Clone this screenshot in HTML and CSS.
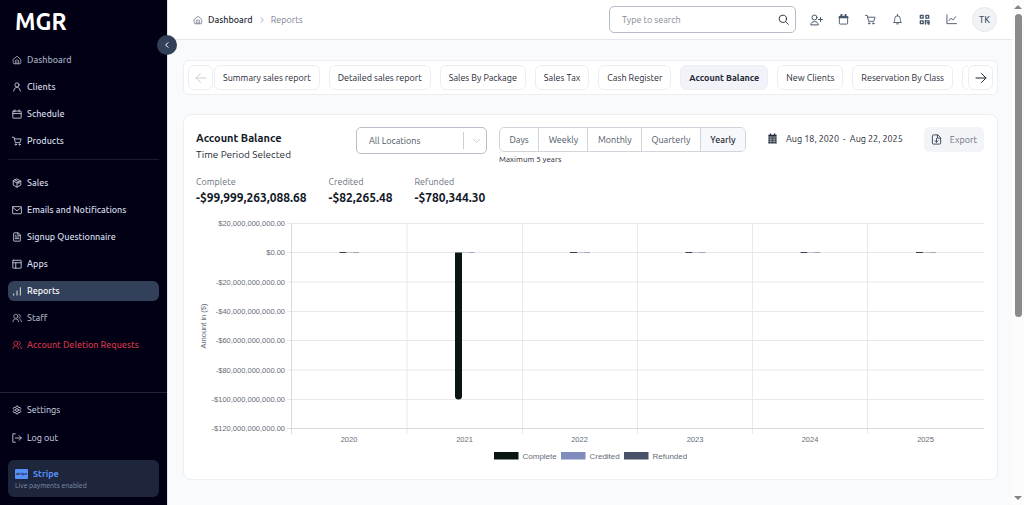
FILE: index.html
```html
<!DOCTYPE html>
<html lang="en">
<head>
<meta charset="utf-8">
<title>Reports - Account Balance</title>
<meta name="viewport" content="width=device-width, initial-scale=1">
<link rel="stylesheet" href="styles.css">
</head>
<body>
<svg class="defs" aria-hidden="true">
  <symbol id="home" viewBox="0 0 24 24"><path d="M3 10.500 12 3l9 7.500V19a2 2 0 0 1-2 2H5a2 2 0 0 1-2-2z"/><path d="M8 21v-7a2 2 0 0 1 2-2h4a2 2 0 0 1 2 2v7M12 16v5"/></symbol>
  <symbol id="user" viewBox="0 0 24 24"><circle cx="12" cy="7" r="5"/><path d="M4 22l2-6 4-3h4l4 3 2 6"/></symbol>
  <symbol id="calendar" viewBox="0 0 24 24"><rect x="2" y="5" width="20" height="17" rx="1"/><path d="M2 11h20M7 2v5M17 2v5"/></symbol>
  <symbol id="cart" viewBox="0 0 24 24"><path d="M1 3h4l3 13h11l3-9H6"/><circle cx="9" cy="20.500" r="1.500"/><circle cx="18" cy="20.500" r="1.500"/></symbol>
  <symbol id="box" viewBox="0 0 24 24"><path d="M12 2.500 21 7v10l-9 5-9-5V7zM3 7l9 5 9-5M12 12v10M7.500 4.800l9 4.700v4"/></symbol>
  <symbol id="mail" viewBox="0 0 24 24"><rect x="1.500" y="4" width="21" height="17" rx="1"/><path d="m2 6 10 8L22 6"/></symbol>
  <symbol id="file" viewBox="0 0 24 24"><path d="M14 2H5a1 1 0 0 0-1 1v18a1 1 0 0 0 1 1h14a1 1 0 0 0 1-1V8zM14 2v6h6M8 12h8M8 16h8M8 8h2"/></symbol>
  <symbol id="layout" viewBox="0 0 24 24"><rect x="2" y="3" width="20" height="19" rx="1"/><path d="M2 9h20M9 9v13"/></symbol>
  <symbol id="bars" viewBox="0 0 24 24"><path d="M4 19v3M12 12v10M20 4v18"/></symbol>
  <symbol id="users" viewBox="0 0 24 24"><circle cx="9" cy="8" r="5"/><path d="M2 21a7 7 0 0 1 14 0M16 3a5 5 0 0 1 1 9.500M19 15a7 7 0 0 1 4 6"/></symbol>
  <symbol id="gear" viewBox="0 0 24 24"><path d="m9.500 4 .8-2.500h3.400l.8 2.500 2.300 1.300 2.600-.6 1.700 3-1.800 2v2.600l1.800 2-1.700 3-2.600-.6-2.300 1.300-.8 2.500h-3.400L9.500 18l-2.300-1.300-2.600.6-1.700-3 1.800-2V9.700l-1.800-2 1.700-3 2.600.6z" transform="translate(0 1)"/><circle cx="12" cy="12" r="3.500"/></symbol>
  <symbol id="logout" viewBox="0 0 24 24"><path d="M8 2H2v20h6M8 12h14M17 6.500l5.500 5.500-5.500 5.500"/></symbol>
  <symbol id="left" viewBox="0 0 24 24"><path d="m15 5-7 7 7 7"/></symbol>
  <symbol id="right" viewBox="0 0 24 24"><path d="m9 5 7 7-7 7"/></symbol>
  <symbol id="down" viewBox="0 0 24 24"><path d="m3 8 9 9 9-9"/></symbol>
  <symbol id="arrow-left" viewBox="0 0 24 24"><path d="M22 12H2M11 3l-9 9 9 9"/></symbol>
  <symbol id="arrow-right" viewBox="0 0 24 24"><path d="M2 12h20M13 3l9 9-9 9"/></symbol>
  <symbol id="search" viewBox="0 0 24 24"><circle cx="10.500" cy="10.500" r="8"/><path d="m16.500 16.500 6 6"/></symbol>
  <symbol id="user-plus" viewBox="0 0 26 24"><circle cx="9" cy="7" r="5"/><path d="M1.500 21c0-8 15-8 15 0zM21 7v8M17 11h8"/></symbol>
  <symbol id="date" viewBox="0 0 24 24"><rect x="3" y="5" width="18" height="17" rx="2"/><path d="M3 7h18M7.500 1.500V5M16.500 1.500V5" stroke-width="4"/></symbol>
  <symbol id="bell" viewBox="0 0 24 24"><path d="M12 1v3M4 18c2-2 2-4 2-8a6 6 0 0 1 12 0c0 4 0 6 2 8zM10 21.500h4"/></symbol>
  <symbol id="qr" viewBox="0 0 24 24"><path d="M3 3h6v6H3zM15 3h6v6h-6zM3 15h6v6H3zM14 14v8M14 15h8v4h-4M20 22h2"/></symbol>
  <symbol id="chart" viewBox="0 0 24 24"><path d="M2 2v19h21M6 15l5-6 4 4 6-7"/></symbol>
  <symbol id="calendar-solid" viewBox="0 0 24 24"><path d="M3 4h3V1h3v3h6V1h3v3h3v4H3zM3 9h18v14H3z" fill="currentColor" stroke="none"/><path d="M3 13.500h18M3 18h18M8.500 9v14M15.500 9v14" stroke="#fff" stroke-width="1"/></symbol>
  <symbol id="export" viewBox="0 0 24 24"><path d="M14 2H5a2 2 0 0 0-2 2v16a2 2 0 0 0 2 2h14a2 2 0 0 0 2-2V9zM14 2v7h7M12 10v8M8.500 14.500l3.500 3.500 3.500-3.500"/></symbol>
</svg>

<div class="app">
  <aside class="sidebar">
    <div class="brand">MGR</div>
    <nav class="nav nav-main">
      <a class="item dim" href="#"><svg class="icon"><use href="#home"/></svg>Dashboard</a>
      <a class="item" href="#"><svg class="icon"><use href="#user"/></svg>Clients</a>
      <a class="item" href="#"><svg class="icon"><use href="#calendar"/></svg>Schedule</a>
      <a class="item" href="#"><svg class="icon"><use href="#cart"/></svg>Products</a>
    </nav>
    <nav class="nav nav-more">
      <a class="item" href="#"><svg class="icon"><use href="#box"/></svg>Sales</a>
      <a class="item" href="#"><svg class="icon"><use href="#mail"/></svg>Emails and Notifications</a>
      <a class="item" href="#"><svg class="icon"><use href="#file"/></svg>Signup Questionnaire</a>
      <a class="item" href="#"><svg class="icon"><use href="#layout"/></svg>Apps</a>
      <a class="item active" href="#" aria-current="page"><svg class="icon"><use href="#bars"/></svg>Reports</a>
      <a class="item dim" href="#"><svg class="icon"><use href="#users"/></svg>Staff</a>
      <a class="item danger" href="#"><svg class="icon"><use href="#users"/></svg>Account Deletion Requests</a>
    </nav>
    <div class="side-foot">
      <a class="item" href="#"><svg class="icon"><use href="#gear"/></svg>Settings</a>
      <a class="item" href="#"><svg class="icon"><use href="#logout"/></svg>Log out</a>
      <a class="stripe" href="#">
        <span class="stripe-name"><span class="stripe-logo">stripe</span>Stripe</span>
        <span class="stripe-note">Live payments enabled</span>
      </a>
    </div>
    <button class="collapse" type="button" aria-label="Collapse sidebar"><svg class="icon small"><use href="#left"/></svg></button>
  </aside>

  <div class="page">
    <header class="topbar">
      <nav class="crumbs" aria-label="Breadcrumb">
        <svg class="icon"><use href="#home"/></svg>
        <a class="crumb" href="#">Dashboard</a>
        <svg class="icon small"><use href="#right"/></svg>
        <span>Reports</span>
      </nav>
      <div class="search">
        <input class="search-input" type="text" placeholder="Type to search" aria-label="Search">
        <button class="search-btn" type="button" aria-label="Search"><svg class="icon mid"><use href="#search"/></svg></button>
      </div>
      <div class="tools">
        <button class="tool" type="button" aria-label="Add client"><svg class="icon wide"><use href="#user-plus"/></svg></button>
        <button class="tool" type="button" aria-label="Calendar"><svg class="icon mid"><use href="#date"/></svg></button>
        <button class="tool" type="button" aria-label="Cart"><svg class="icon mid"><use href="#cart"/></svg></button>
        <button class="tool" type="button" aria-label="Notifications"><svg class="icon mid"><use href="#bell"/></svg></button>
        <button class="tool" type="button" aria-label="QR code"><svg class="icon mid heavy"><use href="#qr"/></svg></button>
        <button class="tool" type="button" aria-label="Statistics"><svg class="icon mid"><use href="#chart"/></svg></button>
      </div>
      <button class="avatar" type="button">TK</button>
    </header>

    <main class="content">
      <div class="tabs">
        <button class="arrow off" type="button" aria-label="Previous" disabled><svg class="icon big"><use href="#arrow-left"/></svg></button>
        <div class="tab-strip">
          <button class="tab" type="button">Summary sales report</button>
          <button class="tab" type="button">Detailed sales report</button>
          <button class="tab" type="button">Sales By Package</button>
          <button class="tab" type="button">Sales Tax</button>
          <button class="tab" type="button">Cash Register</button>
          <button class="tab current" type="button">Account Balance</button>
          <button class="tab" type="button">New Clients</button>
          <button class="tab" type="button">Reservation By Class</button>
          <button class="tab" type="button" aria-label="More reports"></button>
        </div>
        <button class="arrow" type="button" aria-label="Next"><svg class="icon big"><use href="#arrow-right"/></svg></button>
      </div>

      <section class="card">
        <div class="card-head">
          <div class="titles">
            <h1 class="title">Account Balance</h1>
            <p class="subtitle">Time Period Selected</p>
          </div>
          <div class="select-box">
            <select class="select" aria-label="Location"><option>All Locations</option></select>
            <svg class="icon select-arrow"><use href="#down"/></svg>
          </div>
          <div class="period">
            <div class="segments">
              <button class="seg" type="button">Days</button>
              <button class="seg" type="button">Weekly</button>
              <button class="seg" type="button">Monthly</button>
              <button class="seg" type="button">Quarterly</button>
              <button class="seg on" type="button">Yearly</button>
            </div>
            <p class="hint">Maximum 5 years</p>
          </div>
          <button class="range" type="button"><svg class="icon mid"><use href="#calendar-solid"/></svg><span>Aug 18, 2020 &nbsp;-&nbsp; Aug 22, 2025</span></button>
          <button class="export" type="button"><svg class="icon mid"><use href="#export"/></svg>Export</button>
        </div>

        <dl class="totals">
          <div><dt>Complete</dt><dd>-$99,999,263,088.68</dd></div>
          <div><dt>Credited</dt><dd>-$82,265.48</dd></div>
          <div><dt>Refunded</dt><dd>-$780,344.30</dd></div>
        </dl>

        <svg class="chart" viewBox="0 0 1576 500" role="img" aria-label="Account balance by year">
          <g class="grid">
            <path d="M182 17H1576M182 75H1576M182 134H1576M182 193H1576M182 251H1576M182 310H1576M182 369H1576"/>
            <path d="M422 17V438M653 17V438M883 17V438M1113 17V438M1343 17V438"/>
          </g>
          <path class="axis" d="M182 427H1576M191 17V438"/>
          <g class="ylabels">
            <text x="178" y="22">$20,000,000,000.00</text>
            <text x="178" y="80">$0.00</text>
            <text x="178" y="139">-$20,000,000,000.00</text>
            <text x="178" y="198">-$40,000,000,000.00</text>
            <text x="178" y="256">-$60,000,000,000.00</text>
            <text x="178" y="315">-$80,000,000,000.00</text>
            <text x="178" y="374">-$100,000,000,000.00</text>
            <text x="178" y="432">-$120,000,000,000.00</text>
          </g>
          <text class="xlabel" transform="translate(19 222) rotate(-90)">Amount in ($)</text>
          <g class="xlabel">
            <text x="306" y="454">2020</text><text x="537" y="454">2021</text><text x="767" y="454">2022</text>
            <text x="998" y="454">2023</text><text x="1228" y="454">2024</text><text x="1459" y="454">2025</text>
          </g>
          <path class="complete" d="M518 75h14v287a7 7 0 0 1-14 0z"/>
          <path class="thin-dark" d="M287 75h14M748 75h14M979 75h14M1209 75h14M1440 75h14"/>
          <path class="thin-light" d="M301 75h13M532 75h13M762 75h13M993 75h13M1223 75h13M1454 75h13"/>
          <path class="thin-mid" d="M314 75h12M545 75h12M775 75h13M1006 75h13M1236 75h13M1467 75h13"/>
          <rect class="complete" x="596" y="474" width="49" height="15"/>
          <rect class="credited" x="730" y="474" width="49" height="15"/>
          <rect class="refunded" x="856" y="474" width="49" height="15"/>
          <g class="legend">
            <text x="653" y="487">Complete</text><text x="787" y="487">Credited</text><text x="913" y="487">Refunded</text>
          </g>
        </svg>
      </section>

      <section class="card next"></section>
    </main>
  </div>

  <div class="scrollbar" aria-hidden="true">
    <svg class="scroll-arrow" viewBox="0 0 8 4"><path d="M0 4 4 0l4 4z"/></svg>
    <div class="thumb"></div>
    <svg class="scroll-arrow" viewBox="0 0 8 4"><path d="M0 0h8L4 4z"/></svg>
  </div>
</div>
</body>
</html>
```
FILE: styles.css
```css
* { box-sizing: border-box; }
body { margin: 0; font-family: Ubuntu, "Noto Sans", sans-serif; font-size: 9px; line-height: 12px; color: #1f2937; background: #f9fafc; }
h1, p, dl, dd { margin: 0; }
a { color: inherit; text-decoration: none; }
button, input, select { font: inherit; color: inherit; margin: 0; padding: 0; border: 0; background: none; }
.defs { display: none; }
.icon { width: 10px; height: 10px; flex: none; fill: none; stroke: currentColor; stroke-width: 2; stroke-linecap: round; stroke-linejoin: round; }
.icon.small { width: 8px; height: 8px; stroke-width: 3; }
.icon.mid { width: 11px; height: 11px; }
.icon.big { width: 12px; height: 12px; }
.icon.wide { width: 13px; height: 12px; }
.icon.heavy { stroke-width: 3; }

.app { display: flex; height: 100vh; overflow: hidden; }

.sidebar { position: relative; flex: none; width: 167px; display: flex; flex-direction: column; background: #020014; color: #d3dbe8; }
.brand { padding: 6px 0 0 15px; height: 50px; font-size: 23px; line-height: 32px; font-weight: 600; color: #fff; }
.nav { display: flex; flex-direction: column; gap: 7px; margin: 0 8px; }
.nav-main { padding-bottom: 8px; border-bottom: 1px solid #1a1b30; }
.nav-more { padding-top: 13px; }
.item { display: flex; align-items: center; gap: 5px; height: 20px; padding: 0 4px; border-radius: 6px; font-weight: 500; }
.item.dim { color: #a3adbf; }
.item.active { background: #334059; color: #fff; }
.item.danger { color: #cf3549; }
.side-foot { display: flex; flex-direction: column; gap: 8px; margin-top: auto; padding: 7px 8px 8px; border-top: 1px solid #23243a; }
.side-foot .item { font-weight: 400; }
.stripe { display: flex; flex-direction: column; margin-top: 4px; padding: 8px 7px 6px; height: 37px; border-radius: 6px; background: #1d263d; }
.stripe-name { display: flex; align-items: center; gap: 5px; color: #5591f7; font-weight: 600; }
.stripe-logo { width: 13px; height: 10px; border-radius: 1px; background: #5591f7; color: #1d263d; font-size: 4px; line-height: 10px; text-align: center; }
.stripe-note { font-size: 7px; line-height: 10px; color: #8290a8; }
.collapse { position: absolute; top: 35px; right: -10px; z-index: 2; display: grid; place-items: center; width: 20px; height: 20px; border-radius: 50%; background: #334059; color: #fff; }

.page { flex: 1; min-width: 0; display: flex; flex-direction: column; border-left: 1px solid #e2e4e8; }
.topbar { flex: none; display: flex; align-items: center; height: 40px; padding: 0 15px 0 25px; background: #fff; border-bottom: 1px solid #e5e7eb; }
.crumbs { display: flex; align-items: center; gap: 5px; color: #7b8393; }
.crumbs .small { stroke-width: 2; }
.crumb { color: #1f2937; font-weight: 500; }
.search { display: flex; align-items: center; width: 187px; height: 27px; margin-left: auto; padding: 0 6px 0 12px; border: 1px solid #b6bcc6; border-radius: 5px; }
.search-input { flex: 1; min-width: 0; outline: 0; }
.search-input::placeholder { color: #858b95; opacity: 1; }
.search-btn { display: grid; color: #1f2937; }
.tools { display: flex; align-items: center; gap: 7px; margin: 0 11px 0 10px; color: #475569; }
.tool { display: grid; place-items: center; width: 20px; height: 20px; }
.tools, .avatar { flex: none; }
.avatar { width: 25px; height: 25px; border: 1px solid #e5e7eb; border-radius: 50%; background: #f1f3f7; color: #475569; font-weight: 500; }

.content { padding: 20px 14px 0 15px; }
.tabs { display: flex; align-items: center; height: 35px; padding: 0 4px; background: #fff; border: 1px solid #eceef2; border-radius: 6px; }
.arrow { flex: none; display: grid; place-items: center; width: 25px; height: 25px; border: 1px solid #eceef2; border-radius: 6px; background: #fff; }
.arrow.off { color: #ccd0d6; }
.tab-strip { flex: 1; min-width: 0; display: flex; gap: 9px; padding-left: 1px; overflow: hidden; }
.tab { flex: none; height: 25px; min-width: 25px; padding: 0 8px; border: 1px solid #eceef2; border-radius: 6px; white-space: nowrap; }
.tab.current { background: #f2f3f8; font-weight: 600; }

.card { margin-top: 19px; padding: 12px 13px 14px 12px; background: #fff; border: 1px solid #eceef2; border-radius: 8px; }
.card.next { margin-top: 25px; height: 100px; }
.card-head { display: flex; align-items: flex-start; }
.titles { flex: 1; padding-top: 3px; white-space: nowrap; }
.title { font-size: 11px; line-height: 17px; font-weight: 600; color: #111827; }
.subtitle { font-size: 10px; line-height: 16px; }
.select-box { position: relative; flex: none; width: 131px; margin-right: 12px; }
.select { display: block; width: 100%; height: 27px; padding: 0 12px; border: 1px solid #b9bec8; border-radius: 5px; appearance: none; color: #4b5563; background: linear-gradient(#ccd0d6, #ccd0d6) right 22px center / 1px 17px no-repeat; }
.select-arrow { position: absolute; top: 9px; right: 6px; width: 9px; height: 9px; color: #b9bec8; pointer-events: none; }
.period { flex: none; width: 247px; margin-right: 12px; }
.segments { display: flex; border: 1px solid #d1d5db; border-radius: 5px; overflow: hidden; }
.seg { flex: auto; height: 23px; padding: 0 9px; color: #4b5563; }
.seg + .seg { border-left: 1px solid #d1d5db; }
.seg.on { background: #f6f8fb; color: #1f2937; font-weight: 500; }
.hint { margin-top: 2px; font-size: 8px; }
.range { flex: none; display: flex; align-items: center; gap: 8px; width: 154px; height: 23px; padding: 0 9px; border-radius: 5px; white-space: nowrap; }
.export { flex: none; display: flex; align-items: center; justify-content: space-between; width: 60px; height: 25px; margin-left: 12px; padding: 0 7px; border-radius: 5px; background: #f3f4f8; color: #6b7280; }
.export .icon { color: #374151; }
.totals { display: flex; gap: 22px; margin-top: 9px; }
.totals dt { line-height: 14px; color: #6b7280; }
.totals dd { font-size: 12px; line-height: 18px; font-weight: 600; color: #111827; }

.chart { display: block; width: 100%; height: auto; margin-top: 8px; font-family: "Liberation Sans", Arial, sans-serif; font-size: 15px; fill: #666c78; }
.grid { fill: none; stroke: #e9e9e9; stroke-width: 2; }
.axis { fill: none; stroke: #d9d9d9; stroke-width: 2; }
.ylabels { text-anchor: end; }
.xlabel { text-anchor: middle; }
.legend { font-size: 16px; }
.complete { fill: #0b1512; }
.credited { fill: #7f8dbd; }
.refunded { fill: #475269; }
.thin-dark { stroke: #3a403f; stroke-width: 2; }
.thin-light { stroke: #bdc4dc; stroke-width: 2; }
.thin-mid { stroke: #a4a8b5; stroke-width: 2; }

.scrollbar { flex: none; display: flex; flex-direction: column; align-items: center; width: 12px; padding: 5px 0; background: #fcfcfc; }
.scroll-arrow { flex: none; width: 8px; height: 4px; fill: #858585; }
.thumb { width: 7px; height: 60vh; margin: 5px 0 auto; border-radius: 4px; background: #8b8b8b; }
```
